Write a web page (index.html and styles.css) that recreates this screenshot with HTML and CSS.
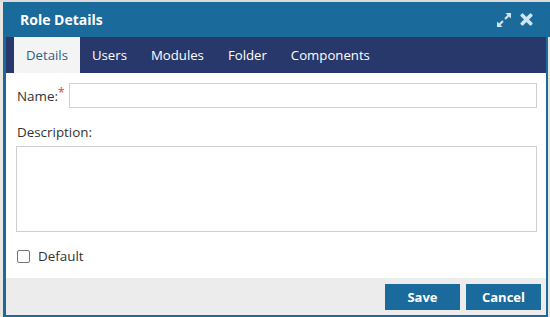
FILE: index.html
```html
<!DOCTYPE html>
<html lang="en">
<head>
	<meta charset="UTF-8">
	<title>Role Details</title>
	<link rel="stylesheet" href="styles.css">
</head>
<body>
	<div class="page">
		<div class="dialog">
			<div class="dialog-head">
				<span class="dialog-title">Role Details</span>
				<span class="head-tools">
					<svg class="tool" width="16" height="16" viewBox="0 0 16 16">
						<path d="M9.5 1h5.5v5.5l-2-2-3.2 3.2-1.5-1.5 3.2-3.2z" fill="#d3e4f1"/>
						<path d="M6.5 15H1V9.5l2 2 3.2-3.2 1.5 1.5-3.2 3.2z" fill="#d3e4f1"/>
					</svg>
					<svg class="tool" width="13" height="13" viewBox="0 0 13 13">
						<path d="M2.5 1.5 6.5 5.5 10.5 1.5 11.5 2.5 7.5 6.5 11.5 10.5 10.5 11.5 6.5 7.5 2.5 11.5 1.5 10.5 5.5 6.5 1.5 2.5z" fill="#d3e4f1" stroke="#d3e4f1" stroke-width="2.2" stroke-linejoin="round"/>
					</svg>
				</span>
			</div>
			<div class="dialog-frame">
				<ul class="tabs">
					<li class="active">Details</li>
					<li>Users</li>
					<li>Modules</li>
					<li>Folder</li>
					<li>Components</li>
				</ul>
				<div class="dialog-body">
					<div class="field-row">
						<label class="label">Name:<span class="req">*</span></label>
						<input type="text" class="text-input">
					</div>
					<label class="label block-label">Description:</label>
					<textarea class="text-area"></textarea>
					<label class="check-row">
						<span class="check-box"></span>
						<span class="label">Default</span>
					</label>
				</div>
				<div class="dialog-foot">
					<button class="btn">Save</button>
					<button class="btn">Cancel</button>
				</div>
			</div>
		</div>
	</div>
</body>
</html>
```
FILE: styles.css
```css
*{
	margin: 0;
	padding: 0;
	box-sizing: border-box;
}
body{
	background-color: #e8e6e1;
	font-family: "Open Sans", "Noto Sans", sans-serif;
}
.page{
	padding: 2px 0 0 3px;
	background: linear-gradient(#dadada, #dadada) top / 100% 2px no-repeat, #e8e6e1;
	height: 317px;
	overflow: hidden;
}
.dialog{
	width: 547px;
}
.dialog-head{
	height: 35px;
	background-color: #1b6a9c;
	display: flex;
	align-items: center;
	justify-content: space-between;
	padding: 0 17px 0 17px;
}
.dialog-title{
	color: #fff;
	font-size: 14px;
	font-weight: bold;
}
.head-tools{
	display: flex;
	align-items: center;
	gap: 8px;
}
.tool{
	display: block;
}
.dialog-frame{
	margin-right: 2px;
	border: 3px solid #1b6a9c;
	border-top: 0;
	border-right-width: 2px;
	background-color: #fff;
}
.tabs{
	list-style: none;
	display: flex;
	height: 36px;
	padding-left: 8px;
	background-color: #29386a;
}
.tabs li{
	display: flex;
	align-items: center;
	padding: 0 12px;
	color: #fff;
	font-size: 13.2px;
}
.tabs li.active{
	background-color: #f4f4f4;
	color: #2c5f8e;
}
.dialog-body{
	padding: 10px 9px 13px 10px;
}
.field-row{
	display: flex;
	align-items: center;
	gap: 4px;
}
.label{
	color: #333;
	font-size: 13.4px;
	padding-left: 1px;
}
.req{
	color: #e53935;
	font-size: 12px;
	vertical-align: top;
	line-height: 12px;
}
.text-input{
	flex: 1;
	height: 25px;
	border: 1px solid #cfcfcf;
	outline: none;
}
.block-label{
	display: block;
	margin: 15px 0 5px;
	line-height: 18px;
}
.text-area{
	display: block;
	width: 100%;
	height: 86px;
	border: 1px solid #cfcfcf;
	resize: none;
	outline: none;
}
.check-row{
	display: flex;
	align-items: center;
	gap: 7px;
	margin-top: 15px;
	padding-left: 1px;
}
.check-box{
	width: 13px;
	height: 13px;
	border: 1px solid #767676;
	border-radius: 2px;
	background-color: #fff;
}
.dialog-foot{
	display: flex;
	justify-content: flex-end;
	gap: 6px;
	height: 37px;
	padding: 6px 5px 0 0;
	background-color: #ececec;
}
.btn{
	width: 75px;
	height: 26px;
	border: 0;
	background-color: #1b6a9c;
	color: #fff;
	font-family: "Open Sans", "Noto Sans", sans-serif;
	font-size: 13px;
	font-weight: bold;
}
```
